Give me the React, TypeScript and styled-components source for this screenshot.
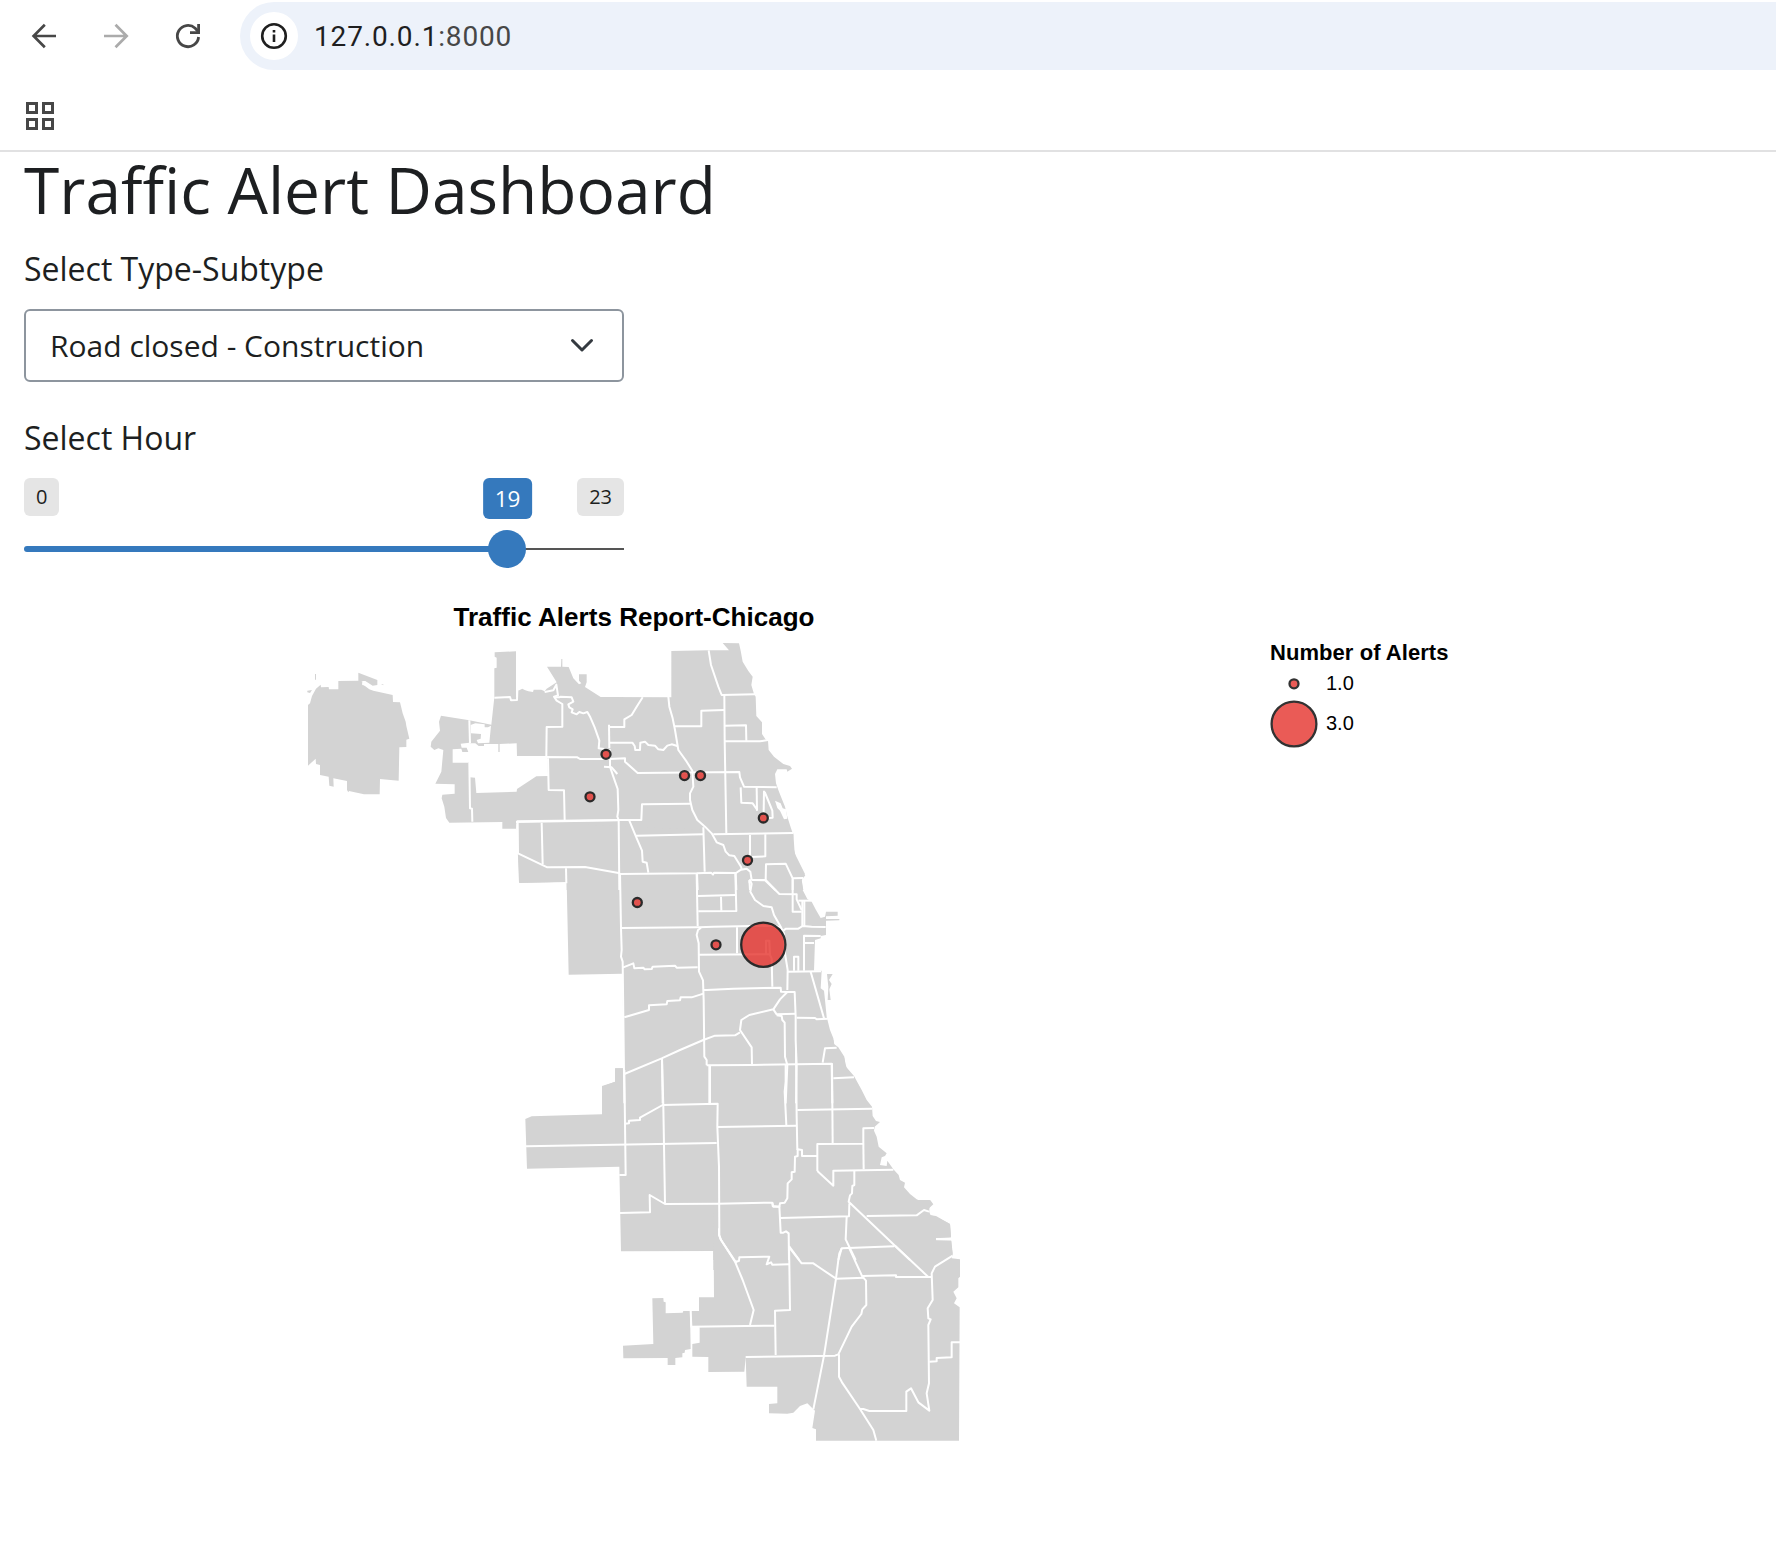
import React from "react";
import styled, { createGlobalStyle } from "styled-components";

const GlobalStyle = createGlobalStyle`
  * { box-sizing: border-box; }
  body {
    margin: 0;
    background: #ffffff;
    color: #1d1f21;
    font-family: "Open Sans", "Noto Sans", sans-serif;
  }
`;

const Page = styled.div`
  display: flex;
  flex-direction: column;
  width: 1776px;
  height: 1566px;
  overflow: hidden;
`;

const BrowserChrome = styled.header`
  display: flex;
  flex-direction: column;
  height: 152px;
  border-bottom: 2px solid #e1e1e2;
`;

const NavRow = styled.div`
  display: flex;
  align-items: center;
  height: 72px;
  padding-left: 28px;
`;

const NavButton = styled.button<{ $muted?: boolean }>`
  display: flex;
  align-items: center;
  justify-content: center;
  width: 32px;
  height: 32px;
  margin-right: 40px;
  padding: 0;
  border: 0;
  background: none;
  color: ${(p) => (p.$muted ? "#ababab" : "#474747")};
`;

const AddressBar = styled.div`
  display: flex;
  flex: 1;
  align-items: center;
  gap: 16px;
  height: 68px;
  margin-left: -4px;
  padding-left: 10px;
  border-radius: 34px 0 0 34px;
  background: #edf2fa;
`;

const SiteInfo = styled.span`
  display: flex;
  align-items: center;
  justify-content: center;
  width: 48px;
  height: 48px;
  border-radius: 50%;
  background: #ffffff;
`;

const Url = styled.span`
  padding-top: 1px;
  font: 400 28px/36px Roboto, sans-serif;
  letter-spacing: 0.85px;
  color: #1f1f1f;
`;

const Port = styled.span`
  color: #474747;
`;

const BookmarkRow = styled.div`
  display: flex;
  align-items: center;
  height: 78px;
  padding: 10px 0 0 26px;
`;

const AppGrid = styled.div`
  display: grid;
  grid-template-columns: 12px 12px;
  gap: 4px;
`;

const AppCell = styled.i`
  height: 12px;
  border: 3px solid #474747;
`;

const Main = styled.main`
  display: flex;
  flex-direction: column;
  align-items: flex-start;
  padding: 0 24px;
`;

const Title = styled.h1`
  margin: 0;
  font-size: 64px;
  font-weight: 400;
  line-height: 76px;
`;

const Field = styled.section<{ $top: number }>`
  display: flex;
  flex-direction: column;
  width: 600px;
  margin-top: ${(p) => p.$top}px;
`;

const Label = styled.label`
  font-size: 32px;
  line-height: 48px;
`;

const SelectBox = styled.div`
  display: flex;
  align-items: center;
  justify-content: space-between;
  height: 73px;
  margin-top: 16px;
  padding: 0 28px 0 24px;
  border: 2px solid #8d959e;
  border-radius: 6px;
  font-size: 30px;
`;

const Slider = styled.div`
  position: relative;
  display: flex;
  flex-direction: column;
  height: 91px;
  margin-top: 16px;
`;

const SliderEnds = styled.div`
  display: flex;
  justify-content: space-between;
`;

const EndTag = styled.span`
  height: 38px;
  padding: 0 12px;
  border-radius: 6px;
  background: #e5e5e5;
  font-size: 20px;
  line-height: 38px;
`;

const ValueTag = styled.span`
  position: absolute;
  top: 0;
  left: 483.5px;
  transform: translateX(-50%);
  height: 41px;
  padding: 0 12px;
  border-radius: 6px;
  background: #3579bd;
  color: #ffffff;
  font-size: 22.5px;
  line-height: 42px;
`;

const Track = styled.div`
  display: flex;
  align-items: center;
  height: 6px;
  margin-top: 30px;
`;

const TrackFill = styled.div`
  width: 483px;
  height: 6px;
  border-radius: 3px 0 0 3px;
  background: #3579bd;
`;

const TrackRest = styled.div`
  flex: 1;
  height: 2px;
  background: #555555;
`;

const Handle = styled.span`
  position: absolute;
  top: 52px;
  left: 464px;
  width: 38px;
  height: 38px;
  border-radius: 50%;
  background: #3579bd;
`;

const Chart = styled.svg`
  display: block;
  margin-top: 21px;
  font-family: "Liberation Sans", Arial, sans-serif;
`;

type Sheet = { x: number; y: number; land: string[]; water?: string[]; lines: string[] };

/* Each sheet covers one part of the city, drawn at three units per pixel. */
const sheets: Sheet[] = [
  {
    x: 290, y: 590,
    land: [
      "54,345 60,340 66,318 78,296 92,284 93,292 116,291 117,298 145,298 145,273 205,272 217,274 217,282 228,290 238,298 250,302 308,315 309,336 330,337 338,370 347,395 349,408 358,446 349,449 349,471 328,472 326,572 270,567 269,613 222,613 177,603 175,607 171,600 171,573 130,565 131,590 118,587 116,560 90,555 90,525 78,522 77,506 54,527",
      "75,252 78,252 78,269 75,269", "52,302 66,300 60,309 52,307", "273,282 280,283 280,286",
      "453,377 538,391 604,404 613,322 613,235 620,233 620,203 614,200 614,187 678,184 678,322 683,322 683,303 697,296 704,300 715,304 729,306 731,299 754,299 764,304 770,296 800,277 771,230 813,230 814,207 817,207 817,230 836,231 850,265 867,283 874,280 867,272 867,253 890,253 890,277 885,291 932,321 1000,322 1000,900 830,900 830,876 688,879 682,700 678,700 678,716 637,716 637,696 478,698 468,684 463,650 455,625 457,614 494,611 494,583 436,581 454,545 460,480 445,475 433,480 422,470 424,455 450,422 447,395",
    ],
    water: [
      "540,460 556,460 566,468 582,468 582,462 625,462 625,486 629,486 629,462 680,460 681,498 771,498 774,558 739,559 681,597 680,605 559,609 555,563 540,562 537,518 488,518 488,478 514,476 517,486 535,486 530,473 515,473 512,461 538,458",
      "542,405 556,400 584,403 584,412 594,412 603,407 598,458 564,460 560,450 572,446 573,432 543,430",
    ],
    lines: [
      "613,323 660,321 663,331 681,330 682,303",
      "764,306 790,301 799,284 804,316 792,320 800,332 817,342 817,410 770,411 769,498",
      "538,391 540,460", "538,518 540,655 546,656 547,695", "774,505 776,600 822,601 824,690",
      "678,696 985,691", "683,697 684,790 772,832 885,831 990,850", "755,698 758,823", "828,835 829,880",
    ],
  },
  {
    x: 530, y: 590,
    land: [
      "200,321 424,322 424,183 536,181 597,181 578,159 627,160 632,182 638,215 655,243 668,260 664,285 672,312 677,320 679,378 696,397 696,432 706,447 714,452 716,480 732,500 760,522 780,528 786,536 772,545 770,538 742,538 735,552 738,580 745,600 752,618 765,650 772,680 783,715 790,735 788,765 795,790 800,820 812,845 826,856 815,870 820,900 200,900",
    ],
    water: ["735,632 752,640 758,655 768,658 772,686 762,688 750,662 742,654"],
    lines: [
      "72,322 88,322 92,320 125,322 130,335 115,343 118,352 128,358 125,367 140,373 148,366 160,370 172,366 181,382 194,412 208,452 206,475 222,477",
      "-40,502 40,501 142,502 150,507 240,507 285,505 285,515 323,549 628,546 630,562 642,590 740,592",
      "222,530 245,532 262,552",
      "237,404 238,475", "237,411 283,411 283,388 305,375 320,350 338,322",
      "237,458 307,458 314,468 316,480 330,480 331,458 345,455 355,465 375,467 385,478 400,480 412,467 425,463 442,468",
      "240,478 240,530 250,560 263,597 265,660 262,680 266,690 268,900",
      "415,320 418,350 428,385 435,420 445,480 470,515 487,542 490,590 480,610 480,630 487,660 502,690 525,710 545,730 560,757 580,765 587,785 598,796 613,798 633,830 635,838",
      "433,409 514,409 514,362 583,360", "536,181 543,225 565,290 575,315 675,313", "583,315 584,450 589,730",
      "585,407 648,406 649,452", "585,454 690,454 714,450",
      "632,592 634,638 668,640 682,660", "680,592 681,662", "702,602 701,668", "704,606 714,630 727,662 728,683 716,684",
      "-40,694 265,690 334,690 336,643 480,641",
      "298,692 318,740 336,782 338,815 350,818 355,848", "318,737 520,733", "520,712 524,845", "550,733 790,729",
      "660,735 660,797", "706,733 706,799 660,801",
      "268,852 500,850 543,848 549,854 552,848 618,849 633,839 650,836 661,845 665,870", "658,870 660,900",
      "665,870 705,871 738,902", "707,871 708,823 767,821 788,865 820,864", "788,865 788,900", "501,850 503,900", "617,850 619,900",
    ],
  },
  {
    x: 500, y: 800,
    land: [
      "50,66 880,100 884,160 915,222 905,240 908,270 922,297 935,305 948,330 962,354 975,350 978,335 1013,335 1013,347 978,349 978,357 1018,357 1018,361 978,362 978,405 962,408 962,415 945,420 942,512 965,512 962,565 972,572 975,600 980,650 990,690 1000,715 1003,735 1020,757 1033,775 1040,805 1062,832 1080,865 1085,910 306,910 306,858 346,845 346,805 373,805 366,521 206,524 200,245 57,248",
      "981,522 998,522 987,540 995,552 988,568 992,600 983,600 985,560",
    ],
    lines: [
      "360,220 363,384 365,450 363,470 368,485 370,650 373,910",
      "590,222 593,378", "706,218 709,333 595,334", "594,288 706,285", "663,290 664,332",
      "363,384 590,382 598,382 640,380 825,377 840,382", "850,392 858,386 895,386 908,378 935,380 977,381",
      "603,383 594,390 590,405 596,430 597,515 609,541 611,600 613,770 620,780 620,796",
      "711,382 711,460", "597,464 808,463", "798,463 798,422 808,422 810,465 815,475 817,560",
      "748,248 750,240 755,252 751,275 765,300 790,318 815,322 822,345 843,382 852,400 855,460 863,510 862,570",
      "797,240 838,282 890,283 890,298 905,330", "755,240 798,240", "878,238 878,335 905,335", "895,302 935,302", "907,302 907,378", "913,302 913,378",
      "912,512 912,407 962,408", "912,429 942,429", "882,512 882,470 895,470 895,512",
      "863,515 963,514", "932,515 972,655",
      "368,503 400,490 403,505 430,503 434,508 455,507 458,500 525,497 530,503 593,502",
      "373,652 447,630 447,616 500,613 502,603 540,601 542,592 575,592 610,581",
      "610,570 620,570 700,566 842,563 843,575 862,576 884,576 887,650 887,720 890,800 888,910",
      "862,576 840,598 820,628 748,645 724,660 720,690 755,742 756,795",
      "373,822 485,775 540,750 610,720 645,707 705,706 720,697",
      "820,628 830,643 887,641", "830,646 845,648 847,660 854,668 855,770 862,795 857,910",
      "890,653 945,654 950,658 983,656", "620,796 755,795 995,791 997,910", "968,788 975,745 1010,743", "1000,835 1062,832",
      "486,775 488,910", "630,798 630,910",
    ],
  },
  {
    x: 510, y: 1050,
    land: ["276,110 315,95 315,55 340,55 345,0 900,0 900,660 610,660 610,603 333,604 328,350 51,356 46,207 65,199 276,193"],
    lines: [
      "343,60 345,220 347,375 328,375", "345,221 357,220 357,212 390,210 390,203 458,165 623,161 622,230 627,350 628,555 633,570 680,640",
      "456,25 460,170 465,460", "598,45 598,160", "48,289 620,279", "622,231 860,227", "827,45 827,95 824,125 829,225", "858,0 860,200 862,300",
      "330,489 420,487 419,435 465,462 625,461 787,458 790,470 808,470",
    ],
  },
  {
    x: 700, y: 1040,
    land: ["0,0 400,0 402,12 415,22 433,50 436,78 462,108 485,150 500,180 516,200 518,228 528,243 540,246 524,260 522,272 530,290 536,320 560,340 555,348 545,352 540,375 560,378 562,362 580,388 596,405 600,420 615,428 612,442 630,462 650,478 670,487 685,487 690,479 700,493 687,505 687,515 692,526 708,530 750,552 753,592 708,594 708,602 754,602 758,640 752,660 40,660 40,632 0,630"],
    lines: [
      "292,210 516,206", "396,70 398,310", "293,328 306,330 306,348 352,348", "352,393 352,312 490,311 490,265 522,264", "490,311 491,388",
      "352,393 400,437 400,392 580,389",
      "293,328 293,348 285,350 284,395 275,397 275,418 263,430 262,475 254,488 240,490 238,500 218,498 217,488",
      "238,498 242,578 250,578 258,574 266,580 267,660", "240,534 447,529 448,492 455,492",
      "463,392 463,435 457,438 456,460 450,466 446,485 630,660", "440,530 437,598 467,660", "415,660 418,640 425,625 583,619",
      "500,528 650,526 672,510 687,515", "267,618 298,660",
    ],
  },
  {
    x: 600, y: 1200,
    land: [
      "340,0 990,0 987,45 1008,48 1050,72 1053,112 1008,114 1008,121 1053,122 1058,165 1055,175 1080,178 1080,230 1075,235 1075,262 1060,275 1070,295 1062,310 1079,322 1077,722 648,722 648,688 637,684 645,632 640,628 622,610 600,618 580,638 562,641 507,640 507,612 532,610 532,560 440,560 437,472 433,515 325,516 325,471 277,470 277,432 299,428 299,382 274,378 274,333 297,333 297,292 342,292",
      "157,295 190,294 191,305 197,307 197,340 248,338 250,333 270,333 272,447 255,450 254,458 247,460 247,472 226,474 226,495 203,495 203,474 70,475 69,437 160,432",
    ],
    lines: [
      "357,85 357,105 362,118 405,185 428,240 461,330 450,375", "405,185 417,183 418,172 508,170 500,193 513,187 517,194 567,193",
      "567,140 568,193 570,330 525,332 527,465", "568,143 605,190 640,190 665,207 708,236 793,233",
      "725,145 715,180 708,236 672,467 640,628", "748,145 787,230 798,242 799,315 787,328 784,342 755,380 715,463 705,467 437,471",
      "787,228 888,226 888,231 995,231", "885,137 984,230",
      "1058,167 1005,200 995,220 998,300 983,325 985,355 992,358 985,375 987,550 980,580 988,632 955,607 933,565 919,575 919,633 808,633 790,627 780,627",
      "717,463 717,530 726,547 780,627 820,690 829,722", "988,485 1010,484 1010,474 1055,472 1055,427 1080,427", "272,333 274,380 523,377",
    ],
  },
];

/* Terminal block north-east of the airport, set off by a service road. */
const terminal = "205,248 262,270 262,285 248,287 226,273 205,273";
const serviceRoad = "217,281 229,283 240,293 252,297";

const alerts = [
  [606, 754.3], [684.5, 775.6], [700.5, 775.6], [590, 796.8], [763.3, 818], [747.5, 860.3], [637.3, 902.5], [716, 944.8],
];

const AlertDot = styled.circle`
  fill: #e6332d;
  stroke: #000000;
  stroke-width: 2.3px;
  opacity: 0.8;
`;

const ChartTitle = styled.text`
  font-size: 26px;
  font-weight: 700;
`;

const LegendTitle = styled.text`
  font-size: 22px;
  font-weight: 700;
`;

const LegendLabel = styled.text`
  font-size: 20px;
`;

const at = (s: { x: number; y: number }) => `translate(${s.x} ${s.y}) scale(${1 / 3})`;

function AlertMap() {
  return (
    <Chart width={1500} height={870} viewBox="24 590 1500 870">
      <ChartTitle x={453.5} y={626} textLength={361}>Traffic Alerts Report-Chicago</ChartTitle>
      {sheets.map((s, i) => (
        <g key={i} transform={at(s)} fill="#d3d3d3">
          {s.land.map((p, j) => <polygon key={j} points={p} />)}
          {s.water?.map((p, j) => <polygon key={`w${j}`} points={p} fill="#ffffff" />)}
        </g>
      ))}
      <g transform={at(sheets[0])}>
        <polygon points={terminal} fill="#d3d3d3" />
        <polyline points={serviceRoad} fill="none" stroke="#ffffff" strokeWidth={8} />
      </g>
      {sheets.map((s, i) => (
        <g key={i} transform={at(s)} fill="none" stroke="#ffffff" strokeWidth={6} strokeLinejoin="round">
          {s.lines.map((p, j) => <polyline key={j} points={p} />)}
        </g>
      ))}
      {alerts.map(([x, y], i) => <AlertDot key={i} cx={x} cy={y} r={4.5} />)}
      <AlertDot cx={763.3} cy={944.8} r={22.1} />
      <LegendTitle x={1270} y={659.5} textLength={178.5}>Number of Alerts</LegendTitle>
      <AlertDot cx={1294} cy={683.8} r={4.5} />
      <LegendLabel x={1326} y={690}>1.0</LegendLabel>
      <AlertDot cx={1294} cy={724} r={22.4} />
      <LegendLabel x={1326} y={730}>3.0</LegendLabel>
    </Chart>
  );
}

const Arrow = ({ flip }: { flip?: boolean }) => (
  <svg width="32" height="32" viewBox="0 0 32 32" fill="none" stroke="currentColor" strokeWidth="2.7">
    <path d={flip ? "M4 16H26.5M15.5 4.8L26.7 16 15.5 27.2" : "M28 16H5.5M16.8 4.8L5.6 16l11.2 11.2"} />
  </svg>
);

export default function App() {
  return (
    <Page>
      <GlobalStyle />
      <BrowserChrome>
        <NavRow>
          <NavButton><Arrow /></NavButton>
          <NavButton $muted><Arrow flip /></NavButton>
          <NavButton>
            <svg width="32" height="32" viewBox="0 0 32 32" fill="none" stroke="currentColor" strokeWidth="2.8">
              <path d="M26.6 17A10.65 10.65 0 1 1 23.2 8.2L26.6 12" />
              <path d="M26.6 4v8.6H18" />
            </svg>
          </NavButton>
          <AddressBar>
            <SiteInfo>
              <svg width="28" height="28" viewBox="0 0 28 28" fill="none" stroke="#1f1f1f" strokeWidth="2.6">
                <circle cx="14" cy="14" r="11.8" />
                <path d="M14 12.6V20M14 8v2.6" />
              </svg>
            </SiteInfo>
            <Url>127.0.0.1<Port>:8000</Port></Url>
          </AddressBar>
        </NavRow>
        <BookmarkRow>
          <AppGrid><AppCell /><AppCell /><AppCell /><AppCell /></AppGrid>
        </BookmarkRow>
      </BrowserChrome>
      <Main>
        <Title>Traffic Alert Dashboard</Title>
        <Field $top={17}>
          <Label>Select Type-Subtype</Label>
          <SelectBox>
            Road closed - Construction
            <svg width="24" height="24" viewBox="0 0 24 24" fill="none" stroke="#343a40" strokeWidth="3" strokeLinecap="round" strokeLinejoin="round">
              <path d="M2.5 6.5L12 16 21.5 6.5" />
            </svg>
          </SelectBox>
        </Field>
        <Field $top={32}>
          <Label>Select Hour</Label>
          <Slider>
            <SliderEnds><EndTag>0</EndTag><EndTag>23</EndTag></SliderEnds>
            <ValueTag>19</ValueTag>
            <Track><TrackFill /><TrackRest /></Track>
            <Handle />
          </Slider>
        </Field>
        <AlertMap />
      </Main>
    </Page>
  );
}
